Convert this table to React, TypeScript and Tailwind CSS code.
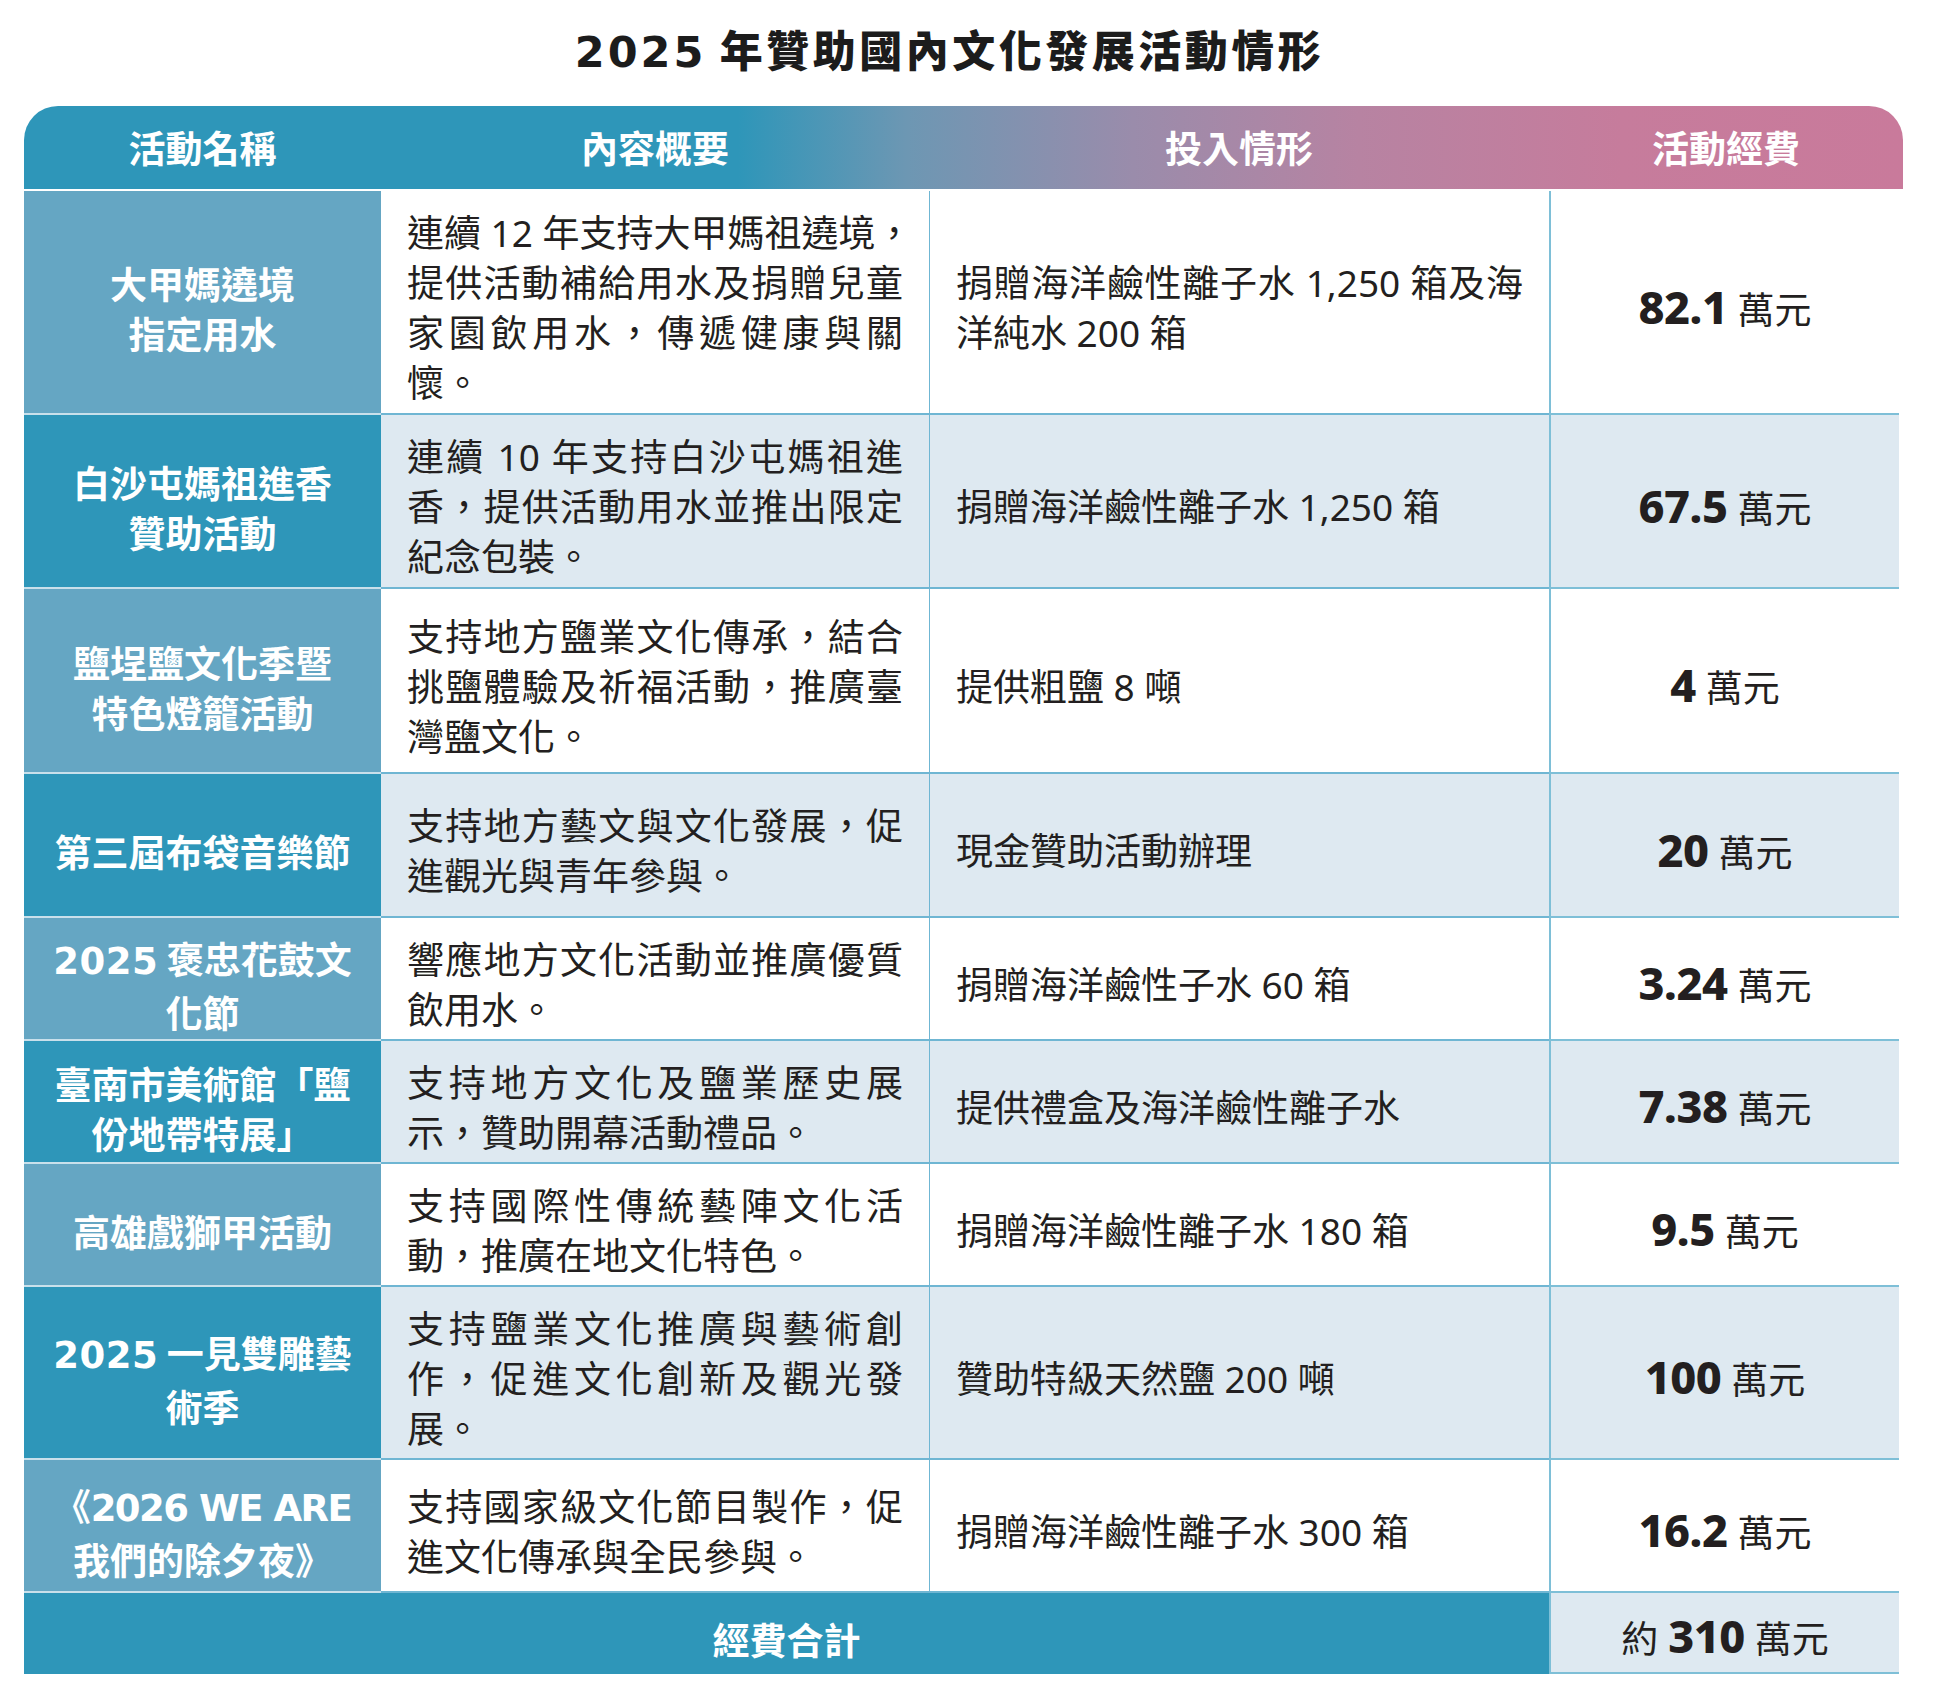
import React from "react";

type Row = {
  name: React.ReactNode[];
  desc: string[];
  input: string[];
  amt: string;
  alt: boolean;
  h: string;
};

const D = ({ children }: { children: React.ReactNode }) => (
  <span className="font-['DejaVu_Sans',sans-serif] font-bold tracking-[0.5px]">{children}</span>
);

const rows: Row[] = [
  {
    name: ["大甲媽遶境", "指定用水"],
    desc: ["連續 12 年支持大甲媽祖遶境，", "提供活動補給用水及捐贈兒童", "家園飲用水，傳遞健康與關", "懷。"],
    input: ["捐贈海洋鹼性離子水 1,250 箱及海", "洋純水 200 箱"],
    amt: "82.1",
    alt: false,
    h: "h-[224px]",
  },
  {
    name: ["白沙屯媽祖進香", "贊助活動"],
    desc: ["連續 10 年支持白沙屯媽祖進", "香，提供活動用水並推出限定", "紀念包裝。"],
    input: ["捐贈海洋鹼性離子水 1,250 箱"],
    amt: "67.5",
    alt: true,
    h: "h-[174px]",
  },
  {
    name: ["鹽埕鹽文化季暨", "特色燈籠活動"],
    desc: ["支持地方鹽業文化傳承，結合", "挑鹽體驗及祈福活動，推廣臺", "灣鹽文化。"],
    input: ["提供粗鹽 8 噸"],
    amt: "4",
    alt: false,
    h: "h-[185px]",
  },
  {
    name: ["第三屆布袋音樂節"],
    desc: ["支持地方藝文與文化發展，促", "進觀光與青年參與。"],
    input: ["現金贊助活動辦理"],
    amt: "20",
    alt: true,
    h: "h-[144px]",
  },
  {
    name: [
      <>
        <D>2025</D> 褒忠花鼓文
      </>,
      "化節",
    ],
    desc: ["響應地方文化活動並推廣優質", "飲用水。"],
    input: ["捐贈海洋鹼性子水 60 箱"],
    amt: "3.24",
    alt: false,
    h: "h-[123px]",
  },
  {
    name: ["臺南市美術館「鹽", "份地帶特展」"],
    desc: ["支持地方文化及鹽業歷史展", "示，贊助開幕活動禮品。"],
    input: ["提供禮盒及海洋鹼性離子水"],
    amt: "7.38",
    alt: true,
    h: "h-[123px]",
  },
  {
    name: ["高雄戲獅甲活動"],
    desc: ["支持國際性傳統藝陣文化活", "動，推廣在地文化特色。"],
    input: ["捐贈海洋鹼性離子水 180 箱"],
    amt: "9.5",
    alt: false,
    h: "h-[123px]",
  },
  {
    name: [
      <>
        <D>2025</D> 一見雙雕藝
      </>,
      "術季",
    ],
    desc: ["支持鹽業文化推廣與藝術創", "作，促進文化創新及觀光發", "展。"],
    input: ["贊助特級天然鹽 200 噸"],
    amt: "100",
    alt: true,
    h: "h-[173px]",
  },
  {
    name: [
      <>
        《<span className="font-['DejaVu_Sans',sans-serif] font-bold tracking-[-1.5px]">2026 WE ARE</span>
      </>,
      "我們的除夕夜》",
    ],
    desc: ["支持國家級文化節目製作，促", "進文化傳承與全民參與。"],
    input: ["捐贈海洋鹼性離子水 300 箱"],
    amt: "16.2",
    alt: false,
    h: "h-[133px]",
  },
];

function Lines({ lines }: { lines: string[] }) {
  return (
    <>
      {lines.map((l, i) => (
        <div
          key={i}
          className={
            i < lines.length - 1
              ? "whitespace-nowrap text-justify [text-align-last:justify]"
              : "whitespace-nowrap"
          }
        >
          {l}
        </div>
      ))}
    </>
  );
}

function Amount({ amt }: { amt: string }) {
  return (
    <div className="flex items-baseline justify-center whitespace-nowrap">
      <span className="text-[45px] font-extrabold tracking-[-0.5px] font-['Noto_Sans',sans-serif]">{amt}</span>
      <span className="ml-[10px] text-[37px]">萬元</span>
    </div>
  );
}

export default function App() {
  return (
    <div className="w-[1949px] h-[1699px] bg-white text-[#231f20] font-['Noto_Sans','Noto_Sans_CJK_TC',sans-serif]">
      <div className="ml-[24px] w-[1879px] h-[106px] flex items-center justify-center pb-[6px] pr-[28px]">
        <h1 className="text-[43px] font-black leading-none tracking-[3.5px] font-['Noto_Sans_CJK_TC',sans-serif] text-[#1c1c1c]">
          <span className="font-['DejaVu_Sans',sans-serif] font-bold tracking-[3px]">2025</span> 年贊助國內文化發展活動情形
        </h1>
      </div>

      <div className="ml-[24px] w-[1879px] h-[83px] rounded-t-[34px] grid grid-cols-[357px_548px_620px_354px] bg-[linear-gradient(to_right,#2e96b9_0%,#2e96b9_38%,#6d97b3_47%,#9a8cab_59%,#b783a2_71%,#c67c9c_85%,#c97a9b_100%)] text-white text-[37px] font-bold font-['Noto_Sans_CJK_TC',sans-serif]">
        <div className="flex items-center justify-center">活動名稱</div>
        <div className="flex items-center justify-center">內容概要</div>
        <div className="flex items-center justify-center">投入情形</div>
        <div className="flex items-center justify-center">活動經費</div>
      </div>

      <div className="ml-[24px] mt-[2px] w-[1875px] text-[37px] leading-[50px]">
        {rows.map((r, i) => (
          <div key={i} className={`grid grid-cols-[357px_548px_620px_350px] ${r.h}`}>
            <div
              className={`flex flex-col items-center justify-center pt-[12px] border-b-2 border-[#c9e0eb] text-white font-bold text-center font-['Noto_Sans_CJK_TC',sans-serif] ${
                r.alt ? "bg-[#2e96b9]" : "bg-[#65a6c3]"
              }`}
            >
              {r.name.map((n, j) => (
                <div key={j} className="whitespace-nowrap">
                  {n}
                </div>
              ))}
            </div>
            <div
              className={`flex flex-col justify-center px-[26px] pt-[12px] border-b-2 border-[#6fb6d3] ${
                r.alt ? "bg-[#dee9f1]" : "bg-white"
              }`}
            >
              <Lines lines={r.desc} />
            </div>
            <div
              className={`flex flex-col justify-center px-[26px] pt-[12px] border-l border-b-2 border-[#6fb6d3] ${
                r.alt ? "bg-[#dee9f1]" : "bg-white"
              }`}
            >
              <Lines lines={r.input} />
            </div>
            <div
              className={`flex items-center justify-center pt-[12px] border-l-2 border-b-2 border-[#7ebfd7] ${
                r.alt ? "bg-[#dee9f1]" : "bg-white"
              }`}
            >
              <Amount amt={r.amt} />
            </div>
          </div>
        ))}

        <div className="grid grid-cols-[1525px_350px] h-[81px]">
          <div className="flex items-center justify-center pt-[10px] bg-[#2e96b9] text-white font-bold font-['Noto_Sans_CJK_TC',sans-serif]">
            經費合計
          </div>
          <div className="flex items-center justify-center pt-[10px] bg-[#dee9f1] border-l-2 border-b-2 border-[#7ebfd7]">
            <div className="flex items-baseline whitespace-nowrap">
              <span>約</span>
              <span className="ml-[10px] text-[45px] font-extrabold tracking-[-0.5px] font-['Noto_Sans',sans-serif]">310</span>
              <span className="ml-[10px]">萬元</span>
            </div>
          </div>
        </div>
      </div>
    </div>
  );
}
